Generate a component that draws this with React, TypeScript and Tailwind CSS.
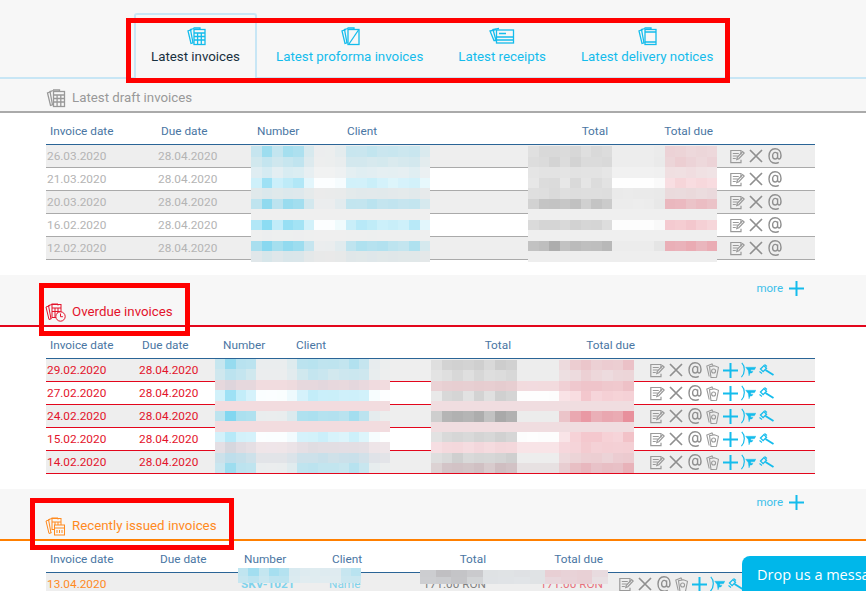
import type { ReactNode } from 'react';

const FONT = "font-['Roboto',sans-serif]";

function mix(a: string, b: string, t: number) {
  const k = Math.min(1, Math.max(0, t));
  const ch = (h: string, i: number) => parseInt(h.slice(i, i + 2), 16);
  const v = [1, 3, 5].map((i) => Math.round(ch(a, i) + (ch(b, i) - ch(a, i)) * k));
  return `rgb(${v[0]},${v[1]},${v[2]})`;
}

// page stack icons
function PagesBack() {
  return (
    <>
      <path d="M6 3.5 2 5l3 12.5 2.5-.8" />
      <path d="M8 2.5 4.5 3.5 7 17" />
      <path d="M7.5 2h6.5v1.5" />
    </>
  );
}

function InvoiceIcon({ className }: { className: string }) {
  return (
    <svg viewBox="0 0 20 20" fill="none" stroke="currentColor" strokeWidth="1.3" className={className}>
      <PagesBack />
      <rect x="8" y="3.5" width="11" height="15" />
      <path d="M8 7h11M8 10.5h11M8 14h11M11.6 7v11.5M15.3 7v11.5" />
    </svg>
  );
}

function ProformaIcon({ className }: { className: string }) {
  return (
    <svg viewBox="0 0 20 20" fill="none" stroke="currentColor" strokeWidth="1.3" className={className}>
      <PagesBack />
      <rect x="8" y="3.5" width="11" height="15" />
      <path d="M9 18 18.5 4" />
    </svg>
  );
}

function ReceiptIcon({ className }: { className: string }) {
  return (
    <svg viewBox="0 0 26 20" fill="none" stroke="currentColor" strokeWidth="1.3" className={className}>
      <path d="M7 3.5 1 5l4 9.5h3" />
      <path d="M10 2.5 4 3.5l3 11" />
      <rect x="7.5" y="4" width="17" height="13" />
      <path d="M7.5 11h17M7.5 14h17M10 7.5h7" />
    </svg>
  );
}

function DeliveryIcon({ className }: { className: string }) {
  return (
    <svg viewBox="0 0 20 20" fill="none" stroke="currentColor" strokeWidth="1.3" className={className}>
      <PagesBack />
      <rect x="8" y="3.5" width="11" height="15" />
      <path d="M8 6h11M8 16h11" />
    </svg>
  );
}

function OverdueIcon() {
  return (
    <svg viewBox="0 0 22 20" fill="none" stroke="currentColor" strokeWidth="1" className="-ml-[2px] h-[20px] w-[22px] shrink-0">
      <PagesBack />
      <rect x="8" y="2.5" width="9" height="13" />
      <path d="M8 6h9M8 9.5h9M11 6v9.5M14 6v9.5" />
      <circle cx="16.5" cy="14.5" r="4.7" fill="#f7f7f7" />
      <path d="M16.5 11.5v3.2h2.4" />
    </svg>
  );
}

function IssuedIcon() {
  return (
    <svg viewBox="0 0 22 20" fill="none" stroke="currentColor" strokeWidth="1" className="-ml-[2px] h-[20px] w-[22px] shrink-0">
      <PagesBack />
      <rect x="8" y="2.5" width="9" height="11" />
      <path d="M8 6h9M11 6v7M14 6v7" />
      <rect x="10.5" y="9" width="10" height="10" fill="#f7f7f7" />
      <path d="M10.5 12h10M13 14v3M15.5 14v3M18 14v3" />
    </svg>
  );
}

function EditIcon() {
  return (
    <svg viewBox="0 0 15 15" fill="none" stroke="#9a9a9a" strokeWidth="1.2" className="h-[15px] w-[15px] shrink-0">
      <path d="M11 5.5V1.5H.8v12.2H11v-3" />
      <path d="M2.8 4.5h6M2.8 7h5M2.8 9.5h3" />
      <path d="m6.8 10.5.5-2.2L12.6 2.5l1.6 1.5-5.4 5.7z" />
    </svg>
  );
}

function CloseIcon() {
  return (
    <span className="flex w-[15px] shrink-0">
      <svg viewBox="0 0 14 14" fill="none" stroke="#8f8f8f" strokeWidth="1.7" className="h-[14px] w-[14px]">
        <path d="M1 1l12 12M13 1 1 13" />
      </svg>
    </span>
  );
}

function AtIcon() {
  return (
    <svg viewBox="0 0 14 16" fill="none" stroke="#8f8f8f" strokeWidth="1.4" className="h-[16px] w-[14px] shrink-0">
      <path d="M10.8 14.4C9.8 15 8.8 15.2 7.5 15.2 3.5 15.2 1 12.4 1 8s2.4-7.3 6-7.3 6 2.6 6 6.6c0 2.4-.8 3.7-2 3.7-.9 0-1.4-.6-1.4-1.7V4.5" />
      <path d="M9.6 9.4C9 10.6 8.2 11 7.2 11 5.6 11 4.6 9.8 4.6 8s1-3.6 2.7-3.6c1 0 1.8.5 2.3 1.4" />
    </svg>
  );
}

function BillsIcon() {
  return (
    <svg viewBox="0 0 13 15" fill="none" stroke="#9a9a9a" strokeWidth="1.1" className="h-[15px] w-[13px] shrink-0">
      <path d="M3.2 13.5 .8 3 6 1l1.2 2" />
      <path d="M5 14.5 3.5 3.6 8.5 2.8l4 1.5-2 10z" />
      <circle cx="7.6" cy="8" r="2" />
    </svg>
  );
}

function PlusIcon({ className }: { className: string }) {
  return (
    <svg viewBox="0 0 15 15" fill="none" stroke="#14bcec" strokeWidth="2" className={className}>
      <path d="M7.5 0v15M0 7.5h15" />
    </svg>
  );
}

function SendIcon() {
  return (
    <svg viewBox="0 0 15 16" fill="none" stroke="#14bcec" className="-mr-[1px] h-[16px] w-[15px] shrink-0">
      <path d="M.8.8c3.4 3.4 3.4 10.4-.4 14.4" strokeWidth="1.2" />
      <path d="M4.6 5.2H15l-1.6 2.6H9.8v1.4H12l-1 1.8H9.2L8 14 7.2 8.6z" fill="#14bcec" strokeWidth="0.3" />
    </svg>
  );
}

function GavelIcon() {
  return (
    <svg viewBox="0 0 15 12" fill="none" stroke="#14bcec" className="h-[12px] w-[15px] shrink-0">
      <path d="m1.5 5 3.4-3.4 2.6 2.6L4.1 7.6z" strokeWidth="1.3" />
      <path d="M.5 7.5 3 9.5M5.5.5 8 2.5" strokeWidth="1.1" />
      <path d="m6.5 6 8 5" strokeWidth="1.9" />
    </svg>
  );
}

type MosaicRow = { bg: string; ink: string; k: number };

// pixelated cover drawn on top of the redacted values
function Mosaic({
  cols,
  rows,
  className,
  cell,
  pinkFrom = 99,
}: {
  cols: number[];
  rows: MosaicRow[];
  className: string;
  cell: string;
  pinkFrom?: number;
}) {
  return (
    <div className={`absolute flex flex-col ${className}`}>
      {rows.map((row, r) => (
        <div key={r} className={`flex ${cell}`}>
          {cols.map((c, i) => (
            <div
              key={i}
              className="flex-1"
              style={{
                backgroundColor: mix(row.bg, i >= pinkFrom ? ROSE : row.ink, row.k * c * (0.88 + ((r * 7 + i * 13) % 5) * 0.06)),
              }}
            />
          ))}
        </div>
      ))}
    </div>
  );
}

const GREY = '#eeeeee';
const WHITE = '#ffffff';
const BLUE = '#6fd3f0';
const STONE = '#a2a2a2';
const ROSE = '#e8909c';
const PINK = '#f2dcdf';

const blue = (bg: string, k: number): MosaicRow => ({ bg, ink: BLUE, k });
const stone = (bg: string, k: number): MosaicRow => ({ bg, ink: STONE, k });

const draftNumCols = [0.6, 1, 0.6, 0.85, 0.85, 0.35, 0.03, 0.03, 0.12, 0.5, 0.55, 0.55, 0.5, 0.45, 0.45, 0.55, 0.25];
const draftTotalCols = [0.6, 0.75, 0.85, 0.65, 0.85, 0.65, 0.75, 0.7, 0.03, 0.03, 0.03, 0.03, 0.12, 0.75, 0.8, 0.75, 0.7, 0.7];
const overdueNumCols = [0.55, 1, 0.7, 0.55, 0.05, 0.05, 0.05, 0.2, 0.55, 0.65, 0.65, 0.55, 0.55, 0.65, 0.5, 0.1, 0.02];
const overdueTotalCols = [0.5, 0.75, 0.9, 0.7, 0.9, 0.7, 0.9, 0.9, 0.03, 0.03, 0.03, 0.03, 0.5, 0.7, 0.95, 0.8, 0.75, 0.8, 0.95];

const draftNumRows = [
  blue(GREY, 0.6), blue(GREY, 0.38), blue('#f2f2f2', 0.22), blue(WHITE, 0.6), blue('#ebebeb', 0.14),
  blue(GREY, 0.7), blue('#efefef', 0), blue(WHITE, 0.8), blue('#efefef', 0.02), blue(GREY, 0.85), blue('#e9e9e9', 0.14),
];
const draftTotalRows = [
  stone(GREY, 0.35), stone(GREY, 0.38), stone('#f2f2f2', 0.25), stone(WHITE, 0.45), stone('#ebebeb', 0.25),
  stone(GREY, 0.7), stone('#efefef', 0), stone(WHITE, 0.6), stone('#efefef', 0), stone(GREY, 0.9), stone('#eeeeee', 0),
];
const overdueNumRows = [
  blue(GREY, 0.65), blue(GREY, 0.45), { bg: PINK, ink: '#b9c8d6', k: 0.35 }, blue(WHITE, 0.6), { bg: PINK, ink: PINK, k: 0 },
  blue(GREY, 0.8), { bg: PINK, ink: PINK, k: 0 }, blue(WHITE, 0.5), { bg: '#f0e6e9', ink: '#aebfcd', k: 0.35 },
  blue('#e4e4e8', 0.35), blue(GREY, 0.6),
];
const overdueTotalRows = [
  stone(GREY, 0.45), stone(GREY, 0.3), { bg: PINK, ink: '#c9a9ad', k: 0.35 }, stone(WHITE, 0.5), { bg: '#f0dde0', ink: '#f0dde0', k: 0 },
  stone(GREY, 0.95), { bg: '#f0dde0', ink: '#f0dde0', k: 0 }, stone(WHITE, 0.55), { bg: '#f8e4e7', ink: '#e8b8c0', k: 0.3 },
  stone(GREY, 0.4), { bg: '#e8e2e3', ink: '#b89ea2', k: 0.55 },
];

type Row = { date: string; due?: string; bg: string };

function Table({
  grid,
  rowLine,
  text,
  actions,
  actionsPad,
  rows,
  cover,
  extra,
}: {
  grid: string;
  rowLine: string;
  text: string;
  actions: ReactNode;
  actionsPad: string;
  rows: Row[];
  cover: ReactNode;
  extra?: (i: number) => { number: string; client: string; total: string; totalDue: string };
}) {
  return (
    <div className="relative ml-[46px] w-[769px]">
      <div className={`grid h-[32px] items-center border-b border-[#2a6496] pt-[7px] text-[11.8px] text-[#4a76a3] ${grid}`}>
        <div className="pl-[4px]">Invoice date</div>
        <div className="pl-[4px]">Due date</div>
        <div className="pl-[4px]">Number</div>
        <div className="pl-[4px]">Client</div>
        <div className="pr-[4px] text-right">Total</div>
        <div className="pr-[4px] text-right">Total due</div>
        <div />
      </div>
      {rows.map((row, i) => {
        const x = extra?.(i);
        return (
          <div key={i} className={`grid h-[23px] items-center border-b pt-[2px] text-[11.8px] ${grid} ${rowLine} ${row.bg} ${text}`}>
            <div className="pl-[1px]">{row.date}</div>
            <div className="pl-[1px]">{row.due}</div>
            <div className="pl-[1px] font-bold text-[#7fd3ec]">{x?.number}</div>
            <div className="pl-[1px] text-[#7fd3ec]">{x?.client}</div>
            <div className="pr-[4px] text-right text-[#808080]">{x?.total}</div>
            <div className="pr-[4px] text-right text-[#e8707c]">{x?.totalDue}</div>
            <div className={`-mt-[2px] flex items-center ${actionsPad}`}>{actions}</div>
          </div>
        );
      })}
      {cover}
    </div>
  );
}

function More() {
  return (
    <div className="flex items-center justify-end gap-[6px] pr-[62px] text-[11.5px] leading-none text-[#3bbfea]">
      more
      <PlusIcon className="h-[15px] w-[15px]" />
    </div>
  );
}

const draftRows: Row[] = [
  { date: '26.03.2020', due: '28.04.2020', bg: 'bg-[#eeeeee]' },
  { date: '21.03.2020', due: '28.04.2020', bg: 'bg-white' },
  { date: '20.03.2020', due: '28.04.2020', bg: 'bg-[#eeeeee]' },
  { date: '16.02.2020', due: '28.04.2020', bg: 'bg-white' },
  { date: '12.02.2020', due: '28.04.2020', bg: 'bg-[#eeeeee]' },
];

const overdueRows: Row[] = [
  { date: '29.02.2020', due: '28.04.2020', bg: 'bg-[#eeeeee]' },
  { date: '27.02.2020', due: '28.04.2020', bg: 'bg-white' },
  { date: '24.02.2020', due: '28.04.2020', bg: 'bg-[#eeeeee]' },
  { date: '15.02.2020', due: '28.04.2020', bg: 'bg-white' },
  { date: '14.02.2020', due: '28.04.2020', bg: 'bg-[#eeeeee]' },
];

function DraftActions() {
  return (
    <div className="flex items-center gap-[4px]">
      <EditIcon />
      <CloseIcon />
      <AtIcon />
    </div>
  );
}

function FullActions() {
  return (
    <div className="flex items-center gap-[4px]">
      <EditIcon />
      <CloseIcon />
      <AtIcon />
      <BillsIcon />
      <PlusIcon className="-mr-[1px] h-[15px] w-[15px] shrink-0" />
      <SendIcon />
      <GavelIcon />
    </div>
  );
}

const tabs = [
  { label: 'Latest proforma invoices', icon: <ProformaIcon className="h-[20px] w-[20px]" /> },
  { label: 'Latest receipts', icon: <ReceiptIcon className="h-[20px] w-[26px]" /> },
  { label: 'Latest delivery notices', icon: <DeliveryIcon className="h-[20px] w-[20px]" /> },
];

export default function App() {
  return (
    <div className={`relative h-[591px] w-[866px] overflow-hidden bg-[#f7f7f7] ${FONT}`}>
      {/* tabs */}
      <div className="flex h-[79px] items-end border-b-2 border-[#c8e6f5] pl-[134px] text-[13.3px]">
        <div className="-mb-[2px] flex h-[66px] w-[123px] flex-col items-center rounded-t-[3px] border-2 border-b-0 border-[#c8e6f5] bg-[#f7f7f7] pt-[11px] text-[#17303f]">
          <InvoiceIcon className="h-[20px] w-[20px] text-[#14bcec]" />
          <span className="mt-[1px] leading-[20px]">Latest invoices</span>
        </div>
        {tabs.map((t) => (
          <div key={t.label} className="-mb-[2px] flex h-[66px] flex-col items-center pl-[19px] pr-[16px] pt-[13px] text-[#14bcec]">
            {t.icon}
            <span className="mt-[1px] leading-[20px]">{t.label}</span>
          </div>
        ))}
      </div>

      {/* drafts */}
      <div className="flex h-[34px] items-center gap-[6px] border-b-2 border-[#aaaaaa] pl-[45px] pt-[6px] text-[13.3px] text-[#999999]">
        <InvoiceIcon className="h-[20px] w-[21px] shrink-0" />
        Latest draft invoices
      </div>
      <div className="h-[162px] bg-white">
        <Table
          grid="grid-cols-[111px_96px_90px_100px_169px_105px_98px]"
          rowLine="border-[#aaaaaa]"
          text="text-[#b4b4b4]"
          actions={<DraftActions />}
          actionsPad="pl-[13px]"
          rows={draftRows}
          cover={
            <>
              <Mosaic cols={draftNumCols} rows={draftNumRows} className="left-[205px] top-[33px] w-[179px]" cell="h-[10.5px]" />
              <Mosaic cols={draftTotalCols} rows={draftTotalRows} pinkFrom={13} className="left-[482px] top-[33px] w-[189px]" cell="h-[10.5px]" />
            </>
          }
        />
      </div>

      {/* overdue */}
      <div className="h-[52px] border-b-2 border-[#e3061c] pt-[6px]">
        <More />
        <div className="mt-[6px] flex items-center gap-[6px] pl-[46px] text-[13.3px] text-[#e3132b]">
          <OverdueIcon />
          Overdue invoices
        </div>
      </div>
      <div className="h-[162px] bg-white">
        <Table
          grid="grid-cols-[92px_81px_73px_100px_123px_124px_176px]"
          rowLine="border-[#e3061c]"
          text="text-[#e3132b]"
          actions={<FullActions />}
          actionsPad="pl-[11px]"
          rows={overdueRows}
          cover={
            <>
              <Mosaic cols={overdueNumCols} rows={overdueNumRows} className="left-[169px] top-[32px] w-[175px]" cell="h-[10.4px]" />
              <Mosaic cols={overdueTotalCols} rows={overdueTotalRows} pinkFrom={12} className="left-[385px] top-[33px] w-[203px]" cell="h-[10.3px]" />
            </>
          }
        />
      </div>

      {/* recently issued */}
      <div className="h-[52px] border-b-2 border-[#ff7f00] pt-[6px]">
        <More />
        <div className="mt-[6px] flex items-center gap-[6px] pl-[46px] text-[13.3px] text-[#ff8a1e]">
          <IssuedIcon />
          Recently issued invoices
        </div>
      </div>
      <div className="h-[60px] bg-white">
        <Table
          grid="grid-cols-[110px_84px_88px_72px_90px_117px_208px]"
          rowLine="border-[#ff7f00]"
          text="text-[#ff8a1e]"
          actions={<FullActions />}
          actionsPad="pl-[12px]"
          rows={[{ date: '13.04.2020', bg: 'bg-[#eeeeee]' }]}
          extra={() => ({ number: 'SKV-1021', client: 'Name', total: '171.00 RON', totalDue: '171.00 RON' })}
          cover={
            <>
              <Mosaic
                cols={[0.6, 0.9, 0.5, 0.8, 0.7, 0.2, 0.1, 0.1, 0.1, 0.1, 0.5, 0.6]}
                rows={[blue('#e6edf0', 0.6), blue('#e6edf0', 0.45)]}
                className="left-[192px] top-[27px] w-[123px]"
                cell="h-[7.5px]"
              />
              <Mosaic
                cols={[0.7, 0.85, 0.85, 0.6, 0.2, 0.2, 0.2, 0.2, 0.4, 0.4, 0.5, 0.25]}
                rows={[{ bg: '#e8ecee', ink: '#a8a4a8', k: 0.7 }, { bg: '#e8ecee', ink: '#a8a4a8', k: 0.6 }]}
                pinkFrom={8}
                className="left-[374px] top-[29px] w-[188px]"
                cell="h-[7px]"
              />
            </>
          }
        />
      </div>

      {/* chat widget */}
      <div className="absolute left-[742px] top-[556px] flex h-[35px] w-[124px] items-center overflow-hidden whitespace-nowrap rounded-tl-[8px] bg-[#00b7ea] pl-[15px] pt-[2px] font-['Open_Sans',sans-serif] text-[14.5px] text-white">
        Drop us a message
      </div>

      {/* red annotations */}
      <div className="absolute left-[126px] top-[18px] h-[65px] w-[604px] border-[5px] border-[#ff0000]" />
      <div className="absolute left-[39px] top-[283px] h-[53px] w-[151px] border-[5px] border-[#ff0000]" />
      <div className="absolute left-[30px] top-[498px] h-[52px] w-[204px] border-[5px] border-[#ff0000]" />
    </div>
  );
}
